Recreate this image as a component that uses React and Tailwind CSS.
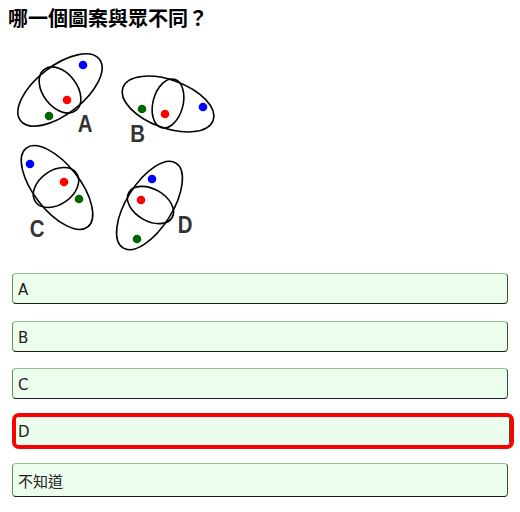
import React from "react";

function Letter({ x, y, ch }) {
  return (
    <text
      x="0"
      y="0"
      transform={`translate(${x},${y}) scale(0.85,1)`}
      textAnchor="middle"
      fontFamily="'Liberation Sans', Arial, sans-serif"
      fontWeight="700"
      fontSize="24"
      fill="#333"
    >
      {ch}
    </text>
  );
}

function Figure() {
  const e = (cx, cy, rx, ry, rot) => (
    <ellipse
      cx={cx}
      cy={cy}
      rx={rx}
      ry={ry}
      transform={`rotate(${rot} ${cx} ${cy})`}
      fill="none"
      stroke="#000"
      strokeWidth="1.6"
    />
  );
  const d = (cx, cy, c) => <circle cx={cx} cy={cy} r="4.3" fill={c} />;
  return (
    <svg width="240" height="220" viewBox="8 36 240 220" className="block">
      {/* A */}
      {e(60, 90, 50, 24, -38)}
      {e(60, 90, 26, 17, 52)}
      {d(83, 65, "#0000ff")}
      {d(67, 100, "#ff0000")}
      {d(49, 116, "#006600")}
      <Letter x={85} y={132} ch="A" />
      {/* B */}
      {e(168, 104, 48, 24, 20)}
      {e(168, 103.5, 25, 15, -75)}
      {d(142, 109, "#006600")}
      {d(165, 114, "#ff0000")}
      {d(203, 107, "#0000ff")}
      <Letter x={137.5} y={142} ch="B" />
      {/* C */}
      {e(57, 187.5, 50, 23, 52)}
      {e(56, 187.5, 25, 17, -35)}
      {d(30, 164, "#0000ff")}
      {d(64, 182, "#ff0000")}
      {d(79, 199, "#006600")}
      <Letter x={37} y={237} ch="C" />
      {/* D */}
      {e(149.5, 205.5, 50, 23, -58)}
      {e(150.5, 205, 25, 16, 30)}
      {d(152, 179, "#0000ff")}
      {d(141, 200, "#ff0000")}
      {d(137, 239, "#006600")}
      <Letter x={185} y={233} ch="D" />
    </svg>
  );
}

const btn =
  "flex items-center w-[496px] pl-[5px] bg-[#edfded] text-[#222] text-[15px] border border-t-[#8fc48f] border-l-[#6a906a] border-r-[#2f5a2f] border-b-[#1a1a1a] rounded-[4px]";

export default function App() {
  return (
    <div className="w-[520px] h-[512px] bg-white pl-[8px] overflow-hidden">
      <div
        className="pt-[6px] text-[20px] leading-[24px] font-bold text-black"
        style={{ fontFamily: "'Noto Sans CJK TC', 'Noto Sans CJK SC', sans-serif" }}
      >
        哪一個圖案與眾不同？
      </div>
      <div className="mt-[6px]">
        <Figure />
      </div>
      <div
        className="ml-[4px] mt-[17px] flex flex-col"
        style={{ fontFamily: "'DejaVu Sans', 'Noto Sans CJK TC', sans-serif" }}
      >
        <div className={`${btn} h-[31px] pt-[4px]`}>A</div>
        <div className={`${btn} h-[31px] pt-[4px] mt-[17px]`}>B</div>
        <div className={`${btn} h-[31px] pt-[4px] mt-[16px]`}>C</div>
        <div className="mt-[14px] w-[502px] h-[36px] border-[4px] border-[#ff0000] rounded-[7px]">
          <div className="flex items-center w-full h-full pl-[2px] pt-[2px] bg-[#edfded] text-[#222] text-[15px] border-r border-r-[#2f5a2f] rounded-[3px]">
            D
          </div>
        </div>
        <div
          className={`${btn} h-[34px] pt-[3px] mt-[14px]`}
          style={{ fontFamily: "'Noto Sans CJK TC', sans-serif" }}
        >
          不知道
        </div>
      </div>
    </div>
  );
}
